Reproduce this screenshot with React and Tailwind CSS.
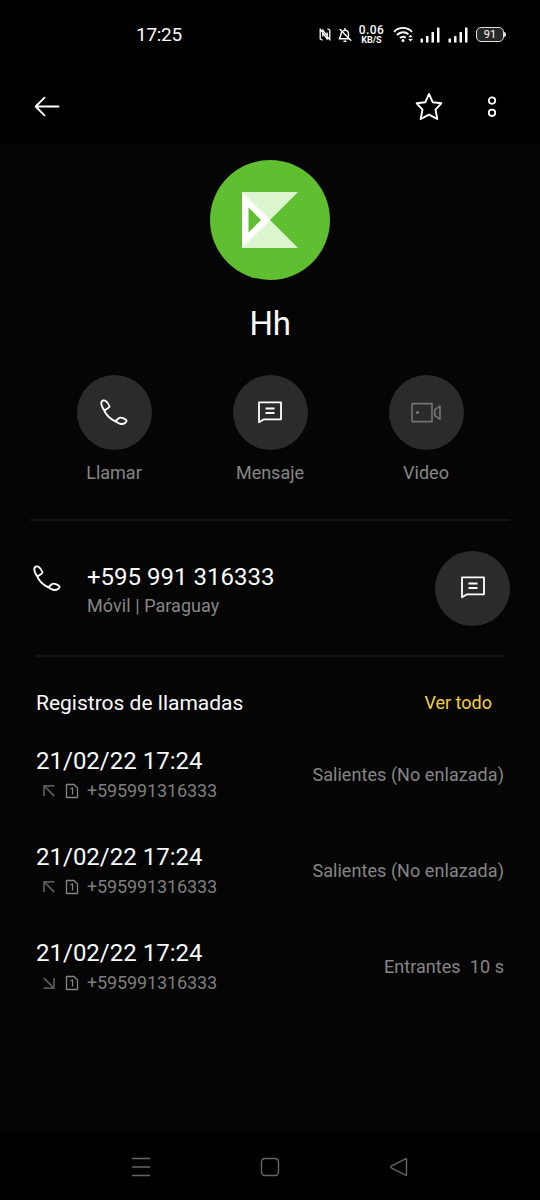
import React from 'react';

const calls = [
  { date: '21/02/22 17:24', number: '+595991316333', info: 'Salientes (No enlazada)', outgoing: true },
  { date: '21/02/22 17:24', number: '+595991316333', info: 'Salientes (No enlazada)', outgoing: true },
  { date: '21/02/22 17:24', number: '+595991316333', info: 'Entrantes  10 s', outgoing: false },
];

const PhoneIcon = () => (
  <svg width="30" height="30" viewBox="0 0 30 30" fill="none" stroke="white" strokeWidth="1.9" strokeLinejoin="round" strokeLinecap="round">
    <path d="M5.3 12.6C3.2 9.2 1.6 5.4 2.6 3.7C3.3 2.5 5 1.9 6.5 2.8C7.5 3.5 9.8 6.6 10.5 8.3C10.9 9.7 6.6 11.2 5.3 12.6C7 16.6 11.8 21.2 16.3 23.3C18.2 22.1 19.5 19.6 21.3 19.6C23.3 19.6 27.2 21.2 27.5 22.5C28 24.6 24.6 26.4 22 26C20 25.7 18 24.5 16.3 23.3" />
  </svg>
);

const MessageIcon = () => (
  <svg width="26" height="26" viewBox="0 0 26 26" fill="none" stroke="white" strokeWidth="1.8" strokeLinejoin="round">
    <path d="M2 2.3H24V19.3H7L2 22.3Z" />
    <path d="M8.5 8.5H17.5M8.5 13H17.5" />
  </svg>
);

const VideoIcon = () => (
  <svg width="32" height="22" viewBox="0 0 32 22" fill="none" stroke="#747474" strokeWidth="1.6" strokeLinejoin="round">
    <path d="M2 1.6H22V19.6H2Z" />
    <path d="M24.8 7.6L30 4.1V17.1L24.8 13.6Z" />
    <circle cx="7.5" cy="10.6" r="1.4" fill="#858585" stroke="none" />
  </svg>
);

const SignalIcon = () => (
  <svg width="20" height="16" viewBox="0 0 20 16" fill="white">
    <rect x="0.5" y="11.5" width="2.5" height="4" rx="0.6" />
    <rect x="6" y="9" width="2.5" height="6.5" rx="0.6" />
    <rect x="11.5" y="5" width="2.5" height="10.5" rx="0.6" />
    <rect x="17" y="0.5" width="2.5" height="15" rx="0.6" />
  </svg>
);

const StatusBar = () => (
  <div className="flex h-[70px] items-center bg-black pr-[34px] pl-[136px]">
    <span className="text-[19px] leading-6 tracking-[-0.3px]">17:25</span>
    <div className="ml-auto flex items-center pb-px">
      <svg width="12" height="15" viewBox="0 0 12 15" fill="none" stroke="white" strokeWidth="1.3" strokeLinejoin="round">
        <path d="M3.6 13.3L1.2 12V2L8.2 12.2V5.5M8.4 1.7L10.8 3V13L3.8 2.8V9.5" />
      </svg>
      <svg className="ml-[7px]" width="14" height="16" viewBox="0 0 14 16" fill="none" stroke="white" strokeWidth="1.4" strokeLinecap="round" strokeLinejoin="round">
        <path d="M5 4C7.5 2.3 10.5 4 10.5 7V9M3.4 5.5C2.8 7.2 3.3 9 1.2 11.8H10.5M7 1.5V2.5M2 2.5L12.8 13.3M6 14.3H8" />
      </svg>
      <div className="ml-[6px] flex w-[27px] flex-col items-center">
        <p className="text-[12px] leading-[12px] font-medium tracking-[0.4px]">0.06</p>
        <p className="text-[9px] leading-[9px] font-bold">KB/S</p>
      </div>
      <svg className="ml-2" width="21" height="17" viewBox="0 0 21 17" fill="none" stroke="white" strokeWidth="1.9">
        <path d="M1 5.8C6 0.6 14 0.6 19 5.8M4 9C7.5 5.4 12.5 5.4 15.5 8.4M7 12C9 10.3 11 10.3 12.8 11.8" />
        <circle cx="10" cy="14.5" r="1.5" fill="white" stroke="none" />
        <path d="M15.2 11.2L17.5 8.8L19.8 11.2ZM15.2 13L17.5 15.4L19.8 13Z" fill="white" stroke="none" />
      </svg>
      <div className="ml-[6px] flex gap-2">
        <SignalIcon />
        <SignalIcon />
      </div>
      <div className="ml-[8px] flex h-[15px] w-[28px] items-center justify-center rounded-[5px] border-[1.5px] border-[#dedede] bg-[#282828] text-[11px] leading-none">91</div>
      <div className="h-[5px] w-[2px] rounded-r bg-[#dedede]"></div>
    </div>
  </div>
);

const Toolbar = () => (
  <div className="flex h-[74px] items-center bg-black pr-[41px] pl-[34px]">
    <svg width="27" height="22" viewBox="0 0 27 22" fill="none" stroke="white" strokeWidth="1.9" strokeLinecap="round" strokeLinejoin="round">
      <path d="M24.5 10.5H1.7M10.5 1.7L1.7 10.5L10.5 19.3" />
    </svg>
    <svg className="ml-auto" width="28" height="30" viewBox="0 0 28 30" fill="none" stroke="white" strokeWidth="1.9" strokeLinejoin="round">
      <path d="M14 2L17.8 10.3L26.3 11.3L20.5 17.6L22.3 27L14 22.6L5.7 27L7.5 17.6L1.7 11.3L10.2 10.3Z" />
    </svg>
    <svg className="ml-[42px]" width="14" height="24" viewBox="0 0 14 24" fill="none" stroke="white" strokeWidth="1.8">
      <circle cx="7" cy="5.6" r="3.2" />
      <circle cx="7" cy="17.8" r="3.2" />
    </svg>
  </div>
);

const Action = ({ label, children }) => (
  <div className="flex w-[156px] flex-col items-center">
    <div className="flex size-[75px] items-center justify-center rounded-full bg-[#2b2b2b] pr-px">{children}</div>
    <p className="mt-[11px] text-lg leading-6 text-[#858585]">{label}</p>
  </div>
);

const CallRow = ({ call }) => (
  <div className="flex h-24 items-center justify-between">
    <div>
      <p className="text-2xl leading-7">{call.date}</p>
      <div className="mt-1 flex h-6 items-center text-[#7d7d7d]">
        <svg className={call.outgoing ? 'ml-[6px]' : 'ml-[6px] rotate-180'} width="14" height="14" viewBox="0 0 14 14" fill="none" stroke="#565656" strokeWidth="1.8">
          <path d="M12.5 1.8H2V12M2 1.8L12.3 12" />
        </svg>
        <svg className="ml-[9px]" width="15" height="16" viewBox="0 0 15 16" fill="none" stroke="#858585" strokeWidth="1.3" strokeLinejoin="round">
          <path d="M1.5 1.5H9L12.5 5V14.5H1.5Z" />
          <path d="M5.5 6L7.5 5V11.5" />
        </svg>
        <span className="ml-[7px] text-lg leading-6 tracking-[-0.12px]">{call.number}</span>
      </div>
    </div>
    <p className="text-lg leading-6 tracking-[0.06px] whitespace-pre text-[#858585]">{call.info}</p>
  </div>
);

const NavBar = () => (
  <div className="flex h-[67px] items-center justify-between bg-black px-[131px]">
    <svg width="20" height="20" viewBox="0 0 20 20" fill="none" stroke="#666" strokeWidth="1.4">
      <path d="M1 1.5H19M1 10H19M1 18.5H19" />
    </svg>
    <svg width="20" height="20" viewBox="0 0 20 20" fill="none" stroke="#666" strokeWidth="1.4">
      <rect x="1.5" y="1.5" width="17" height="17" rx="3.5" />
    </svg>
    <svg width="20" height="20" viewBox="0 0 20 20" fill="none" stroke="#666" strokeWidth="1.4" strokeLinejoin="round">
      <path d="M17.5 2.2V17.8Q17.4 18.5 16.5 18.2L2.2 10.8Q1.4 10 2.2 9.2L16.5 1.8Q17.4 1.5 17.5 2.2Z" />
    </svg>
  </div>
);

const App = () => {
  return (
    <div className="flex h-[1200px] w-[540px] flex-col overflow-hidden bg-[#050505] font-['Roboto',sans-serif] text-[#fafafa]">
      <StatusBar />
      <Toolbar />
      <main className="flex-1">
        <div className="flex flex-col items-center pt-4">
          <svg width="120" height="120" viewBox="0 0 120 120">
            <circle cx="60" cy="60" r="60" fill="#60be31" />
            <path d="M32 32H88L60 60L88 88H32Z" fill="#dcf6cf" />
            <path d="M32 32L60 60L32 88Z" fill="white" />
            <path d="M38.5 47.5L51 60L38.5 72.5Z" fill="#60be31" />
          </svg>
          <h1 className="mt-[25px] text-[33px] leading-[38px] tracking-[-0.3px]">Hh</h1>
        </div>
        <div className="mt-8 flex justify-center">
          <Action label="Llamar"><PhoneIcon /></Action>
          <Action label="Mensaje"><MessageIcon /></Action>
          <Action label="Video"><VideoIcon /></Action>
        </div>

        <div className="mx-[30px] mt-[34px] h-[2px] bg-[#131313]"></div>
        <div className="flex h-[134px] items-center pr-[30px] pl-8">
          <div className="mb-[18px]"><PhoneIcon /></div>
          <div className="mt-[4px] ml-[25px]">
            <p className="text-2xl leading-7">+595 991 316333</p>
            <p className="mt-[3px] text-lg leading-6 tracking-[0.06px] text-[#858585]">Móvil | Paraguay</p>
          </div>
          <div className="ml-auto flex size-[75px] items-center justify-center rounded-full bg-[#2b2b2b]">
            <MessageIcon />
          </div>
        </div>
        <div className="mx-9 h-[2px] bg-[#131313]"></div>

        <section className="px-9">
          <div className="mt-8 flex h-7 items-center justify-between pr-3">
            <h2 className="text-[21px] leading-7">Registros de llamadas</h2>
            <span className="text-lg leading-7 text-[#f3cf3b]">Ver todo</span>
          </div>
          <div className="mt-[10px]">
            {calls.map((call, i) => (
              <CallRow key={i} call={call} />
            ))}
          </div>
        </section>
      </main>
      <NavBar />
    </div>
  );
};

export default App;
